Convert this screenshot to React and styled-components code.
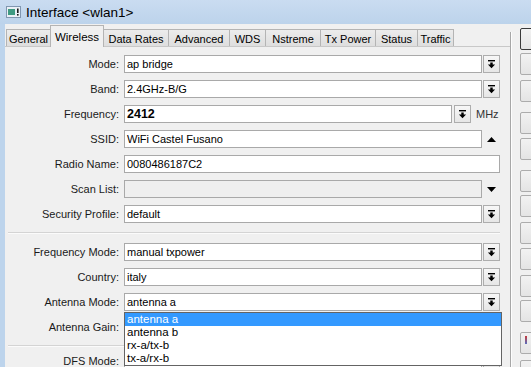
import React from "react";
import styled, { createGlobalStyle } from "styled-components";

const GlobalStyle = createGlobalStyle`
  html, body {
    margin: 0;
    padding: 0;
    overflow: hidden;
  }
  body {
    font-family: "Liberation Sans", Arial, sans-serif;
    font-size: 11px;
    color: #000;
  }
`;

const Window = styled.div`
  width: 531px;
  height: 367px;
  display: flex;
  flex-direction: column;
  overflow: hidden;
  background: #bdd4ec;
`;

const TitleBar = styled.div`
  height: 24px;
  flex: none;
  display: flex;
  align-items: center;
  gap: 5px;
  padding-left: 6px;
  background: linear-gradient(#cadcf1, #bcd3eb);
  font-size: 13.5px;
  color: #000;
`;

const Body = styled.div`
  flex: 1;
  min-height: 0;
  display: flex;
`;

const LeftFrame = styled.div`
  width: 5px;
  flex: none;
  background: #bdd4ec;
`;

const Client = styled.div`
  flex: 1;
  display: flex;
  background: #f0f0f0;
  min-width: 0;
`;

const TabArea = styled.div`
  width: 505px;
  flex: none;
  display: flex;
  flex-direction: column;
`;

const TabStrip = styled.div`
  height: 22px;
  flex: none;
  display: flex;
  align-items: flex-end;
  padding-left: 1px;
  position: relative;
  z-index: 2;
`;

const Tab = styled.div`
  box-sizing: border-box;
  width: ${(p) => p.$w}px;
  height: ${(p) => (p.$active ? 22 : 17)}px;
  margin-bottom: ${(p) => (p.$active ? -1 : 0)}px;
  border: 1px solid #b4b4b4;
  border-bottom: none;
  background: ${(p) =>
    p.$active ? "#f0f0f0" : "linear-gradient(#ececec, #dedede)"};
  display: flex;
  align-items: center;
  justify-content: center;
  padding-top: ${(p) => (p.$active ? 0 : 1)}px;
  font-size: ${(p) => (p.$active ? 11.5 : 11)}px;
  white-space: nowrap;
  & + & {
    margin-left: ${(p) => (p.$ml ? p.$ml : -1)}px;
  }
`;

const Panel = styled.div`
  flex: 1;
  border-top: 1px solid #c8c8c8;
  background: #f0f0f0;
`;

const Form = styled.div`
  display: flex;
  flex-direction: column;
  gap: 7px;
  padding: 8px 10px 0 0;
`;

const Row = styled.div`
  height: 18px;
  display: flex;
  align-items: center;
  position: relative;
`;

const Label = styled.div`
  width: 114px;
  flex: none;
  margin-right: 5px;
  text-align: right;
  white-space: nowrap;
  color: #1a1a1a;
`;

const Field = styled.div`
  flex: 1;
  min-width: 0;
  height: 18px;
  box-sizing: border-box;
  border: 1px solid #a9a9a9;
  background: ${(p) => (p.$disabled ? "#efefef" : "#fff")};
  display: flex;
  align-items: center;
  padding-left: 2px;
  font-size: ${(p) => (p.$bold ? 12.5 : 11)}px;
  font-weight: ${(p) => (p.$bold ? 700 : 400)};
  white-space: nowrap;
  overflow: hidden;
`;

const ArrowButton = styled.div`
  width: 17px;
  height: 18px;
  flex: none;
  box-sizing: border-box;
  margin-left: ${(p) => p.$ml ?? 1}px;
  border: 1px solid #adadad;
  background: linear-gradient(#f7f7f7, #e6e6e6);
  display: flex;
  align-items: center;
  justify-content: center;
`;

const IconSlot = styled.div`
  width: 18px;
  flex: none;
  display: flex;
  align-items: center;
  justify-content: center;
`;

const Unit = styled.div`
  width: 24px;
  flex: none;
  margin-left: 5px;
  color: #333;
  white-space: nowrap;
`;

const Separator = styled.div`
  height: 0;
  margin: 2px 0 ${(p) => p.$after ?? 2}px 3px;
  border-top: 1px solid #d4d4d4;
  border-bottom: 1px solid #fbfbfb;
`;

const DropList = styled.div`
  position: absolute;
  top: 19px;
  left: 119px;
  right: -2px;
  box-sizing: border-box;
  border: 1px solid #646464;
  background: #fff;
  z-index: 5;
`;

const DropItem = styled.div`
  height: 13px;
  line-height: 13px;
  padding-left: 2px;
  font-size: 11.5px;
  background: ${(p) => (p.$active ? "#3399ff" : "transparent")};
  color: ${(p) => (p.$active ? "#fff" : "#000")};
  white-space: nowrap;
`;

const Divider = styled.div`
  width: 1px;
  flex: none;
  margin-top: 8px;
  background: #a7a7a7;
  box-shadow: 1px 0 0 #fdfdfd;
`;

const ButtonColumn = styled.div`
  flex: 1;
  display: flex;
  flex-direction: column;
  padding: 4px 0 0 9px;
  overflow: hidden;
`;

const SideButton = styled.div`
  flex: none;
  width: 30px;
  height: 22px;
  box-sizing: border-box;
  margin-top: ${(p) => p.$gap}px;
  border: 1px solid ${(p) => (p.$default ? "#3a3a3a" : "#acacac")};
  border-radius: 2px;
  background: linear-gradient(#f2f2f2, #e4e4e4);
  position: relative;
`;

const Mark = styled.span`
  position: absolute;
  left: 4px;
  top: 3px;
  width: 2px;
  height: 8px;
  background: linear-gradient(#c43a3a, #5a6fc0);
`;

const DropIcon = () => (
  <svg width="9" height="9" viewBox="0 0 9 9">
    <rect x="1" y="0" width="7" height="1.4" fill="#000" />
    <path d="M3.3 2.6h2.4v1.9h2.4L4.5 8.2 0.9 4.5h2.4z" fill="#000" />
  </svg>
);

const Triangle = ({ up }) => (
  <svg width="9" height="5" viewBox="0 0 9 5">
    <path d={up ? "M0 5h9L4.5 0z" : "M0 0h9L4.5 5z"} fill="#000" />
  </svg>
);

const WindowIcon = () => (
  <svg width="15" height="12" viewBox="0 0 15 12">
    <rect x="0.5" y="0.5" width="14" height="11" fill="#eaf0f6" stroke="#8096b0" />
    <rect x="2" y="3" width="7" height="6" fill="#3f9a82" />
    <rect x="11" y="2.5" width="1.6" height="4.5" fill="#1a1a1a" />
    <rect x="11" y="8" width="1.6" height="1.6" fill="#1a1a1a" />
  </svg>
);

const tabs = [
  { name: "General", w: 45 },
  { name: "Wireless", w: 54, active: true, ml: 4 },
  { name: "Data Rates", w: 66 },
  { name: "Advanced", w: 62 },
  { name: "WDS", w: 37 },
  { name: "Nstreme", w: 56 },
  { name: "Tx Power", w: 56 },
  { name: "Status", w: 43 },
  { name: "Traffic", w: 37 },
];

const buttonGaps = [0, 3, 5, 10, 4, 10, 3, 5, 4, 5, 3, 10, 6];

const antennaOptions = ["antenna a", "antenna b", "rx-a/tx-b", "tx-a/rx-b"];

function SelectRow({ label, value }) {
  return (
    <Row>
      <Label>{label}</Label>
      <Field>{value}</Field>
      <ArrowButton>
        <DropIcon />
      </ArrowButton>
    </Row>
  );
}

export default function App() {
  return (
    <>
      <GlobalStyle />
      <Window>
        <TitleBar>
          <WindowIcon />
          <span>{"Interface <wlan1>"}</span>
        </TitleBar>
        <Body>
          <LeftFrame />
          <Client>
            <TabArea>
              <TabStrip>
                {tabs.map((t) => (
                  <Tab key={t.name} $w={t.w} $active={t.active} $ml={t.ml}>
                    {t.name}
                  </Tab>
                ))}
              </TabStrip>
              <Panel>
                <Form>
                  <SelectRow label="Mode:" value="ap bridge" />
                  <SelectRow label="Band:" value="2.4GHz-B/G" />
                  <Row>
                    <Label>Frequency:</Label>
                    <Field $bold>2412</Field>
                    <ArrowButton $ml={2}>
                      <DropIcon />
                    </ArrowButton>
                    <Unit>MHz</Unit>
                  </Row>
                  <Row>
                    <Label>SSID:</Label>
                    <Field>WiFi Castel Fusano</Field>
                    <IconSlot>
                      <Triangle up />
                    </IconSlot>
                  </Row>
                  <Row>
                    <Label>Radio Name:</Label>
                    <Field>0080486187C2</Field>
                  </Row>
                  <Row>
                    <Label>Scan List:</Label>
                    <Field $disabled />
                    <IconSlot>
                      <Triangle />
                    </IconSlot>
                  </Row>
                  <SelectRow label="Security Profile:" value="default" />
                  <Separator />
                  <SelectRow label="Frequency Mode:" value="manual txpower" />
                  <SelectRow label="Country:" value="italy" />
                  <Row>
                    <Label>Antenna Mode:</Label>
                    <Field>antenna a</Field>
                    <ArrowButton>
                      <DropIcon />
                    </ArrowButton>
                    <DropList>
                      {antennaOptions.map((o, i) => (
                        <DropItem key={o} $active={i === 0}>
                          {o}
                        </DropItem>
                      ))}
                    </DropList>
                  </Row>
                  <Row>
                    <Label>Antenna Gain:</Label>
                    <Field>0</Field>
                    <IconSlot />
                  </Row>
                  <Separator $after={-2} />
                  <SelectRow label="DFS Mode:" value="none" />
                </Form>
              </Panel>
            </TabArea>
            <Divider />
            <ButtonColumn>
              {buttonGaps.map((g, i) => (
                <SideButton key={i} $gap={g} $default={i === 0}>
                  {i === 11 && <Mark />}
                </SideButton>
              ))}
            </ButtonColumn>
          </Client>
        </Body>
      </Window>
    </>
  );
}
